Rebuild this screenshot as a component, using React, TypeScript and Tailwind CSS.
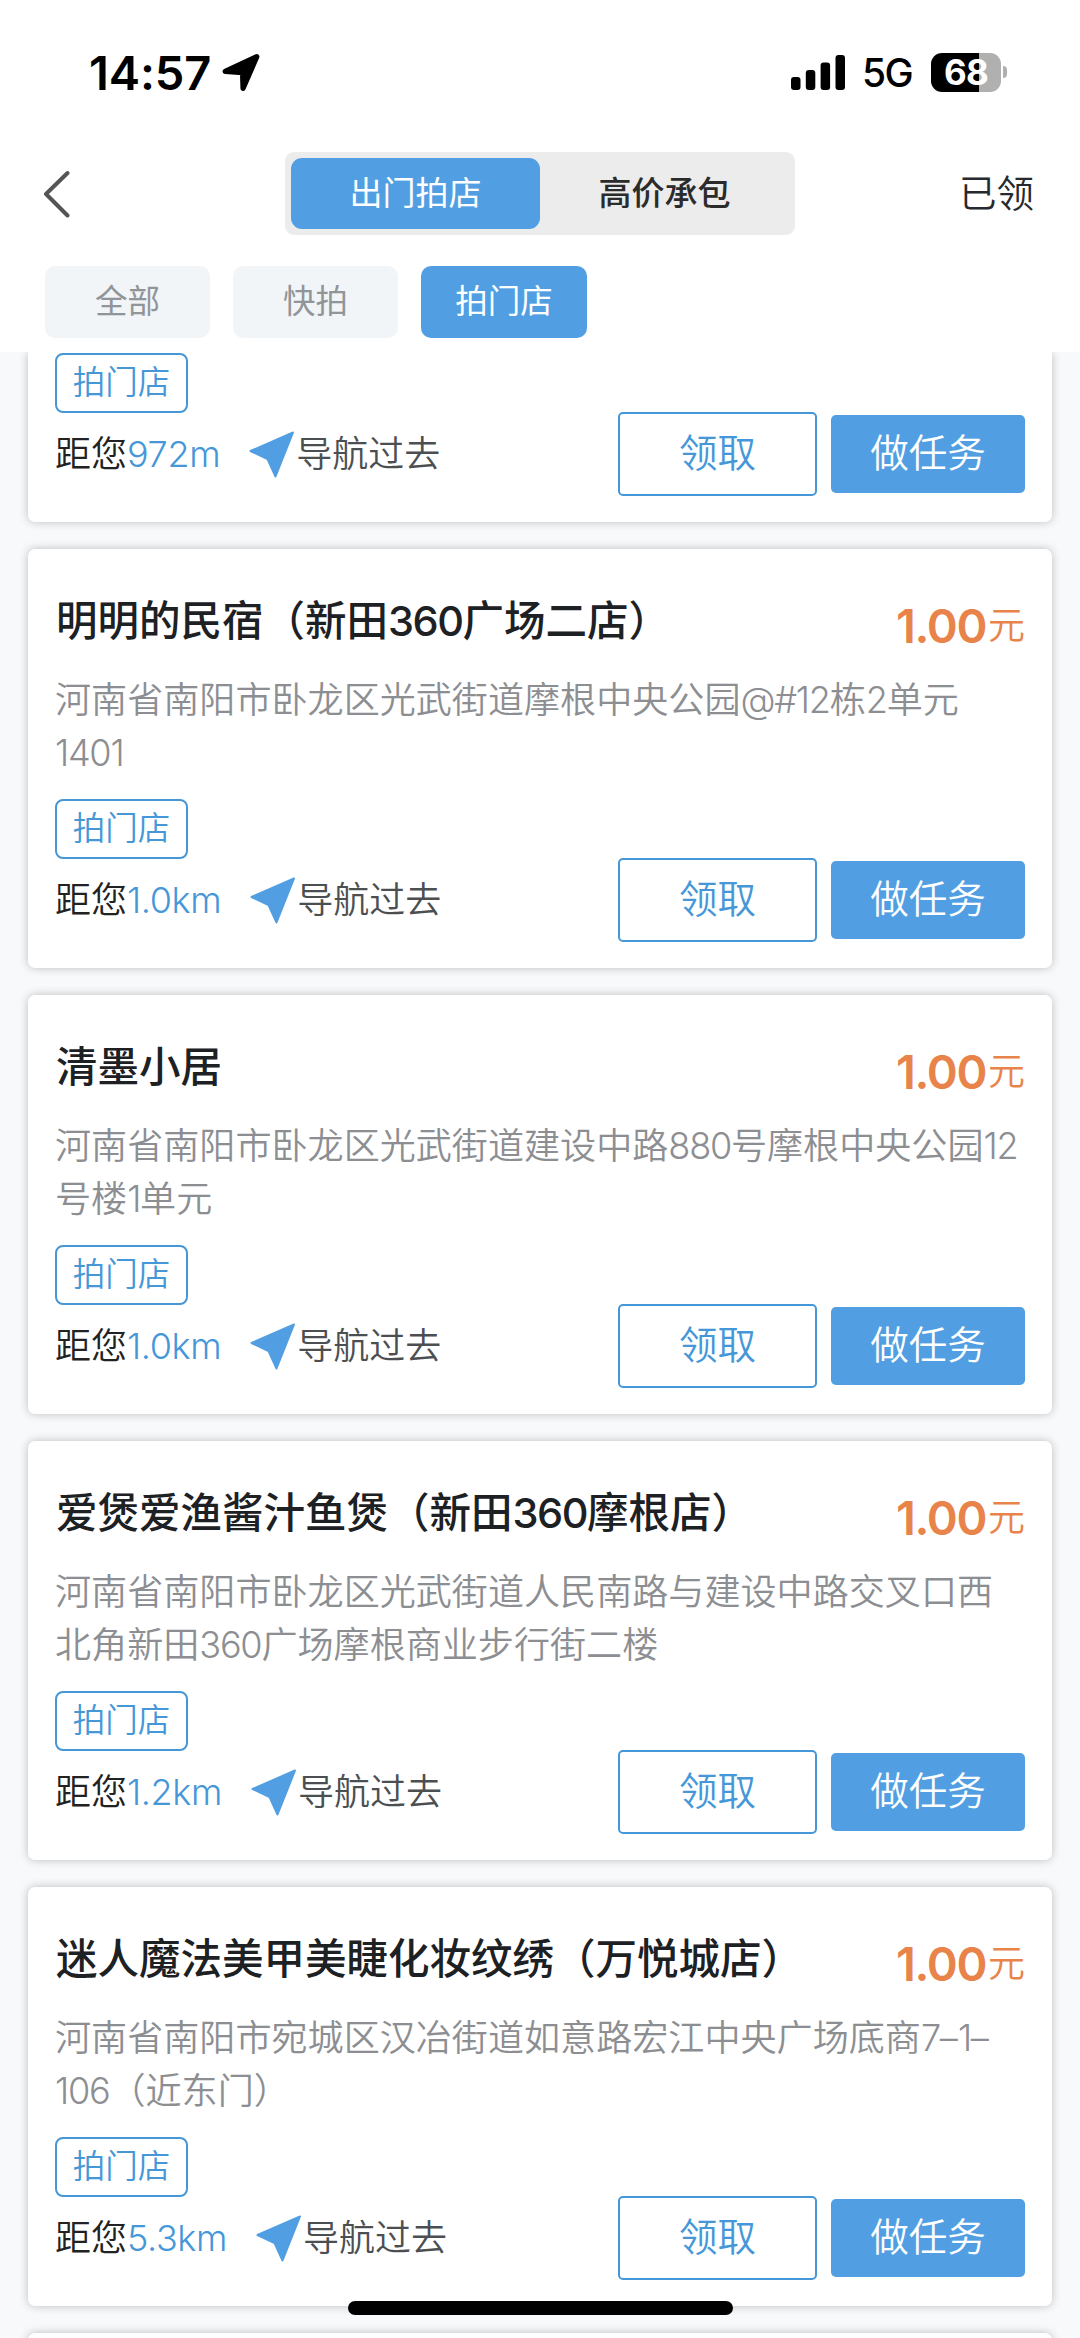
import { Fragment } from "react";

type Task = {
  title?: string;
  address?: string[];
  distance: string;
};

const tasks: Task[] = [
  { distance: "972m" },
  {
    title: "明明的民宿（新田360广场二店）",
    address: ["河南省南阳市卧龙区光武街道摩根中央公园@#12栋2单元", "1401"],
    distance: "1.0km",
  },
  {
    title: "清墨小居",
    address: ["河南省南阳市卧龙区光武街道建设中路880号摩根中央公园12", "号楼1单元"],
    distance: "1.0km",
  },
  {
    title: "爱煲爱渔酱汁鱼煲（新田360摩根店）",
    address: ["河南省南阳市卧龙区光武街道人民南路与建设中路交叉口西", "北角新田360广场摩根商业步行街二楼"],
    distance: "1.2km",
  },
  {
    title: "迷人魔法美甲美睫化妆纹绣（万悦城店）",
    address: ["河南省南阳市宛城区汉冶街道如意路宏江中央广场底商7–1–", "106（近东门）"],
    distance: "5.3km",
  },
];

// Latin runs are set a little tighter than the Chinese text around them
const Mixed = ({ text }: { text: string }) => (
  <>
    {text.split(/([\x21-\x7e]+)/).map((part, i) =>
      i % 2 ? (
        <span key={i} className="tracking-[-0.035em]">{part}</span>
      ) : (
        <Fragment key={i}>{part}</Fragment>
      )
    )}
  </>
);

const StatusBar = () => (
  <div className="flex h-[144px] shrink-0 items-center justify-between pl-[89px] pr-[73px]">
    <div className="flex items-center gap-[11px]">
      <span className="text-[47px] leading-none font-semibold tracking-[-0.003em] text-black">14:57</span>
      <svg width="39" height="39" viewBox="0 0 37 37">
        <path d="M33 3.500 L20 33.500 L19.500 18.500 L3 17.500 Z" fill="#000" stroke="#000" strokeWidth="5" strokeLinejoin="round" />
      </svg>
    </div>
    <div className="flex items-center">
      <svg width="54" height="35" viewBox="0 0 54 35" fill="#000">
        <rect x="0" y="22" width="9.500" height="13" rx="3" />
        <rect x="14.800" y="15" width="9.500" height="20" rx="3" />
        <rect x="29.600" y="7.500" width="9.500" height="27.500" rx="3" />
        <rect x="44.500" y="0" width="9.500" height="35" rx="3" />
      </svg>
      <span className="ml-[17px] w-[52px] text-[39px] leading-none font-medium tracking-[-0.04em] text-black">5G</span>
      <div className="ml-[17px] flex h-[39px] w-[70px] items-center justify-center rounded-[11px] bg-linear-to-r from-black from-68% to-[#b0b0b0] to-68%">
        <span className="text-[35px] leading-none font-bold tracking-[-0.02em] text-white">68</span>
      </div>
      <div className="ml-[2px] h-[12px] w-[4px] rounded-r-full bg-[#b0b0b0]" />
    </div>
  </div>
);

const NavBar = () => (
  <div className="flex h-[99px] shrink-0 items-center justify-between pl-[43px] pr-[46px]">
    <svg width="78" height="48" viewBox="0 0 78 48" fill="none">
      <path d="M24.500 3 L3 24 L24.500 45.500" stroke="#555" strokeWidth="4" strokeLinecap="round" strokeLinejoin="round" />
    </svg>
    <div className="flex h-[83px] w-[510px] rounded-[9px] bg-[#ececec] p-[6px] text-[33px] font-medium">
      <div className="flex w-[249px] items-center justify-center rounded-[11px] bg-[#519fe2] font-normal text-white">出门拍店</div>
      <div className="flex flex-1 items-center justify-center text-[#2b2b2b]">高价承包</div>
    </div>
    <span className="pt-[2px] text-[37.500px] font-[350] text-[#262a2e]">已领</span>
  </div>
);

const Filters = () => (
  <div className="flex h-[109px] shrink-0 gap-[23px] pt-[23px] pl-[45px] text-[32.500px]">
    <div className="flex h-[72px] w-[165px] items-center justify-center rounded-[10px] bg-[#f2f5f7] text-[#909599]">全部</div>
    <div className="flex h-[72px] w-[165px] items-center justify-center rounded-[10px] bg-[#f2f5f7] text-[#909599]">快拍</div>
    <div className="flex h-[72px] w-[166px] items-center justify-center rounded-[10px] bg-[#519fe2] text-white">拍门店</div>
  </div>
);

const TaskCard = ({ task }: { task: Task }) => (
  <div className="shrink-0 rounded-[7px] bg-white pr-[27px] pb-[26px] pl-[27px] font-[350] shadow-[0_0_10px_rgba(0,0,0,0.24)] first:rounded-t-none first:pt-[1px]">
    {task.title && (
      <div className="flex h-[125px] items-start justify-between pt-[42px]">
        <h2 className="pl-[1px] text-[41.500px] leading-[60px] font-medium text-[#1d2124]">
          <Mixed text={task.title} />
        </h2>
        <div className="flex items-start pt-[5px] text-[#e8834a]">
          <span className="text-[47px] leading-[60px] font-semibold tracking-[-0.03em]">1.00</span>
          <span className="ml-[2px] text-[37px] leading-[60px]">元</span>
        </div>
      </div>
    )}
    {task.address && (
      <div className="mb-[20px] text-[36.100px] leading-[52.500px] whitespace-nowrap text-[#8c8e92]">
        {task.address.map((line) => (
          <p key={line}><Mixed text={line} /></p>
        ))}
      </div>
    )}
    <div className="flex h-[60px] w-[133px] items-center justify-center rounded-[8px] border-2 border-[#4597d8] text-[32.500px] text-[#4597d8]">
      拍门店
    </div>
    <div className="mt-[-1px] flex h-[84px] items-center">
      <span className="text-[36px] text-[#222]">距您</span>
      <span className="text-[36px] tracking-[-0.01em] text-[#4597d8]">{task.distance}</span>
      <svg className="ml-[29px]" width="46" height="47" viewBox="0 0 46 47">
        <path d="M44 1.500 L26.500 45.500 L18.500 28 L1.500 20 Z" fill="#519fe2" stroke="#519fe2" strokeWidth="2" strokeLinejoin="round" />
      </svg>
      <span className="ml-px text-[36px] text-[#4c4f52]">导航过去</span>
      <button className="ml-auto flex h-[84px] w-[199px] items-center justify-center rounded-[5px] border-2 border-[#4597d8] text-[38.500px] text-[#4597d8]">
        领取
      </button>
      <button className="ml-[14px] flex h-[78px] w-[194px] items-center justify-center rounded-[5px] bg-[#519fe2] text-[38.500px] text-white">
        做任务
      </button>
    </div>
  </div>
);

const App = () => {
  return (
    <div className="relative flex h-[2338px] w-[1080px] flex-col overflow-hidden bg-white font-['Inter','Noto_Sans_CJK_SC',sans-serif]">
      <StatusBar />
      <NavBar />
      <Filters />
      <main className="flex flex-1 flex-col gap-[27px] overflow-hidden bg-[#f7f9fb] px-[28px]">
        {tasks.map((task, i) => (
          <TaskCard key={i} task={task} />
        ))}
        <div className="h-[60px] shrink-0 rounded-[7px] bg-white shadow-[0_0_10px_rgba(0,0,0,0.24)]" />
      </main>
      <div className="absolute bottom-[23px] left-[348px] h-[14px] w-[385px] rounded-full bg-black" />
    </div>
  );
};

export default App;
